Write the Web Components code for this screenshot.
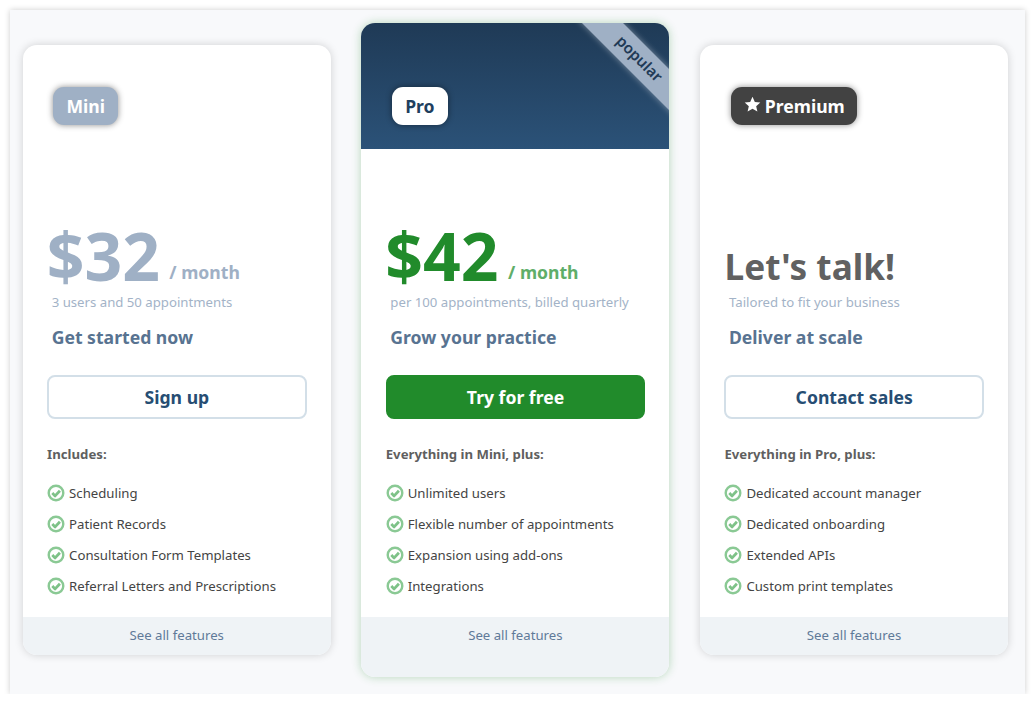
<!DOCTYPE html>
<html lang="en"><head><meta charset="utf-8"><title>Pricing</title>
<style>
html,body{margin:0;padding:0;background:#fff;font-family:"Noto Sans",sans-serif}
</style></head><body>
<pricing-page>
  <plan-card tier="mini">
    <plan-badge slot="badge" tier="mini">Mini</plan-badge>
    <span slot="price">$32</span><span slot="unit">/ month</span>
    <span slot="sub">3 users and 50 appointments</span>
    <span slot="tag">Get started now</span>
    <cta-button slot="cta">Sign up</cta-button>
    <span slot="lead">Includes:</span>
    <check-item>Scheduling</check-item>
    <check-item>Patient Records</check-item>
    <check-item>Consultation Form Templates</check-item>
    <check-item>Referral Letters and Prescriptions</check-item>
  </plan-card>
  <plan-card tier="pro">
    <plan-badge slot="badge" tier="pro">Pro</plan-badge>
    <span slot="price">$42</span><span slot="unit">/ month</span>
    <span slot="sub">per 100 appointments, billed quarterly</span>
    <span slot="tag">Grow your practice</span>
    <cta-button slot="cta" primary>Try for free</cta-button>
    <span slot="lead">Everything in Mini, plus:</span>
    <check-item>Unlimited users</check-item>
    <check-item>Flexible number of appointments</check-item>
    <check-item>Expansion using add-ons</check-item>
    <check-item>Integrations</check-item>
  </plan-card>
  <plan-card tier="premium">
    <plan-badge slot="badge" tier="premium"><svg viewBox="0 0 24 24" width="17" height="17" style="margin-right:4px;margin-top:-5px;flex:none"><path fill="#fff" d="M12 1l3.3 7.3 7.7.8-5.8 5.2 1.7 7.7L12 18.1l-6.9 3.9 1.7-7.7L1 9.1l7.7-.8z"/></svg>Premium</plan-badge>
    <span slot="price">Let's talk!</span>
    <span slot="sub">Tailored to fit your business</span>
    <span slot="tag">Deliver at scale</span>
    <cta-button slot="cta">Contact sales</cta-button>
    <span slot="lead">Everything in Pro, plus:</span>
    <check-item>Dedicated account manager</check-item>
    <check-item>Dedicated onboarding</check-item>
    <check-item>Extended APIs</check-item>
    <check-item>Custom print templates</check-item>
  </plan-card>
</pricing-page>
<script>
function def(name, css, html){
  customElements.define(name, class extends HTMLElement{
    constructor(){super();const r=this.attachShadow({mode:"open"});r.innerHTML="<style>"+css+"</style>"+html;}
  });
}
def("pricing-page",`
:host{display:grid;grid-template-columns:308px 308px 308px;column-gap:30.67px;align-items:center;
box-sizing:border-box;margin:10px 10px 0 10px;width:1015px;height:683.5px;padding:0 0 3.5px 12.7px;background:#f8f9fb;
box-shadow:0 0 6px rgba(0,0,0,.2)}`,`<slot></slot>`);

def("plan-badge",`
:host{display:inline-flex;align-items:center;box-sizing:border-box;height:38px;padding:2px 13.2px 0;border-radius:11px;
font:700 17.6px/1 "Noto Sans",sans-serif;box-shadow:0 0 6px rgba(0,0,0,.45);white-space:nowrap}
:host([tier=mini]){background:#9fb0c5;color:#fff}
:host([tier=pro]){background:#fff;color:#1f3f5f}
:host([tier=premium]){background:#424242;color:#fff;padding-right:12.4px}`,`<slot></slot>`);

def("cta-button",`
:host{display:flex;align-items:center;justify-content:center;box-sizing:border-box;width:259.6px;height:44px;padding-top:1.5px;border-radius:8px;
border:2px solid #d3dfe8;background:#fff;color:#264d73;font:700 17.6px/1 "Noto Sans",sans-serif}
:host([primary]){background:#218b2b;border-color:#218b2b;color:#fff}`,`<slot></slot>`);

def("check-item",`
:host{display:flex;align-items:center;gap:4px;height:31px;color:#444;font:400 13.2px/1 "Noto Sans",sans-serif;white-space:nowrap}
svg{flex:none;width:18px;height:18px;margin-top:-1px}`,
`<svg viewBox="0 0 18 18"><circle cx="9" cy="9" r="7.3" fill="none" stroke="#8ac994" stroke-width="2.4"/><path d="M5.3 9.1l2.8 2.8 4.8-5.2" fill="none" stroke="#7ec288" stroke-width="2.8" stroke-linejoin="round"/></svg><slot></slot>`);

def("plan-card",`
:host{display:flex;flex-direction:column;position:relative;background:#fff;border-radius:14px;overflow:hidden;
height:610px;box-shadow:0 0 9px rgba(0,0,0,.17)}
:host([tier=pro]){height:654px;box-shadow:0 0 10px rgba(34,139,44,.3)}
header{box-sizing:border-box;height:104px;padding:42px 0 0 30.6px;flex:none}
:host([tier=pro]) header{height:126px;padding-top:64px;background:linear-gradient(#1f3a56,#2b5278);position:relative;overflow:hidden}
.ribbon{display:none}
:host([tier=pro]) .ribbon{display:block;position:absolute;top:19px;right:-37px;width:140px;height:29px;text-align:center;
transform:rotate(45deg);background:#9fb0c5;color:#1f3a56;font:600 15.2px/27px "Noto Sans",sans-serif;text-indent:8px;box-shadow:0 0 6px rgba(255,255,255,.4)}
main{flex:1;padding:0 24.4px;display:flex;flex-direction:column;min-height:0}
.price{display:block;padding-top:68px;height:76px;white-space:nowrap;font:700 66px/76px "Noto Sans",sans-serif;margin-left:-.4px}
.amount{color:#9fb0c5}
.unit{font-size:17.6px;color:#9fb0c5;margin-left:9.4px;vertical-align:2px}
:host([tier=pro]) .amount{color:#218b2b}
:host([tier=pro]) .unit{color:#5fae69}
:host([tier=premium]) .amount{font-size:35.2px;color:#616161;vertical-align:1px;margin-left:.6px}
.sub{font:400 13.2px/18px "Noto Sans",sans-serif;color:#a3b3c7;padding-left:4.6px;margin-top:0}
.tag{font:700 17.6px/24px "Noto Sans",sans-serif;color:#587391;padding-left:4.6px;margin-top:14px}
.cta{margin-top:26px}
.lead{font:700 13.2px/18px "Noto Sans",sans-serif;color:#5f5f5f;margin-top:26px;margin-bottom:15px}
footer{flex:none;height:38px;background:#eff3f6;color:#5f7a99;font:400 13.2px/36px "Noto Sans",sans-serif;text-align:center}
:host([tier=pro]) footer{height:60px}`,
`<header><slot name="badge"></slot><div class="ribbon">popular</div></header>
<main>
<div class="price"><span class="amount"><slot name="price"></slot></span><span class="unit"><slot name="unit"></slot></span></div>
<div class="sub"><slot name="sub"></slot></div>
<div class="tag"><slot name="tag"></slot></div>
<div class="cta"><slot name="cta"></slot></div>
<div class="lead"><slot name="lead"></slot></div>
<div><slot></slot></div>
</main>
<footer>See all features</footer>`);
</script>
</body></html>
